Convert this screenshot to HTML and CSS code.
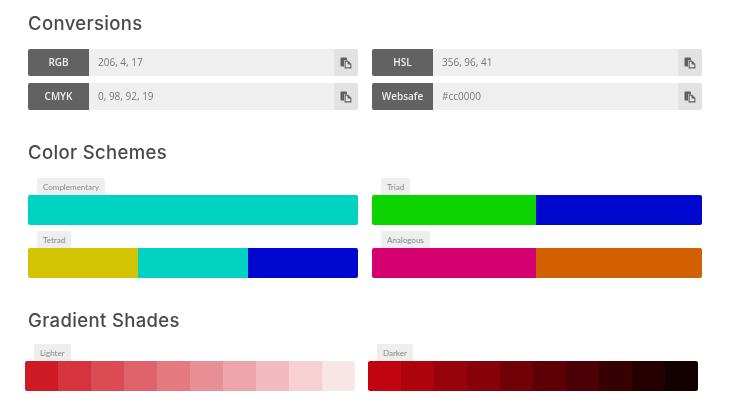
FILE: index.html
```html
<!DOCTYPE html>
<html lang="en">
<head>
<meta charset="utf-8">
<title>Color details</title>
<link rel="stylesheet" href="styles.css">
</head>
<body>
<svg class="defs" width="0" height="0" aria-hidden="true">
  <symbol id="copy" viewBox="0 0 12 12">
    <path d="M0.5 1.5 Q0.5 0.5 1.5 0.5 H6 Q7 0.5 7 1.5 V3 H5 Q4 3 4 4 V9.5 H1.5 Q0.5 9.5 0.5 8.5 Z" fill="#5f5f5f"/>
    <path d="M4.6 3.6 H8 L11.4 7 V11.4 H4.6 Z" fill="#5f5f5f"/>
    <path d="M5.7 4.7 H7.6 V7.4 H10.3 V10.3 H5.7 Z" fill="#e6e6e6"/>
  </symbol>
</svg>
<main class="page">
  <section class="conversions">
    <h2 class="title">Conversions</h2>
    <div class="grid field-grid">
      <div class="field"><span class="field-label">RGB</span><span class="field-value">206, 4, 17</span><span class="copy"><svg class="copy-icon"><use href="#copy"/></svg></span></div>
      <div class="field"><span class="field-label">HSL</span><span class="field-value">356, 96, 41</span><span class="copy"><svg class="copy-icon"><use href="#copy"/></svg></span></div>
      <div class="field"><span class="field-label">CMYK</span><span class="field-value">0, 98, 92, 19</span><span class="copy"><svg class="copy-icon"><use href="#copy"/></svg></span></div>
      <div class="field"><span class="field-label">Websafe</span><span class="field-value">#cc0000</span><span class="copy"><svg class="copy-icon"><use href="#copy"/></svg></span></div>
    </div>
  </section>

  <section class="schemes">
    <h2 class="title">Color Schemes</h2>
    <div class="grid scheme-grid">
      <div class="swatch-group"><span class="tag">Complementary</span>
        <div class="bar"><i class="c-teal"></i></div></div>
      <div class="swatch-group"><span class="tag">Triad</span>
        <div class="bar"><i class="c-green"></i><i class="c-blue"></i></div></div>
      <div class="swatch-group"><span class="tag">Tetrad</span>
        <div class="bar"><i class="c-yellow"></i><i class="c-teal"></i><i class="c-blue"></i></div></div>
      <div class="swatch-group"><span class="tag">Analogous</span>
        <div class="bar"><i class="c-pink"></i><i class="c-orange"></i></div></div>
    </div>
  </section>

  <section class="shades">
    <h2 class="title">Gradient Shades</h2>
    <div class="grid shade-grid">
      <div class="swatch-group"><span class="tag">Lighter</span>
        <div class="bar">
          <i class="l0"></i><i class="l1"></i><i class="l2"></i><i class="l3"></i><i class="l4"></i><i class="l5"></i><i class="l6"></i><i class="l7"></i><i class="l8"></i><i class="l9"></i>
        </div></div>
      <div class="swatch-group"><span class="tag">Darker</span>
        <div class="bar">
          <i class="d0"></i><i class="d1"></i><i class="d2"></i><i class="d3"></i><i class="d4"></i><i class="d5"></i><i class="d6"></i><i class="d7"></i><i class="d8"></i><i class="d9"></i>
        </div></div>
    </div>
  </section>
</main>
</body>
</html>
```
FILE: styles.css
```css
html, body { margin: 0; padding: 0; background: #fff; }
body { width: 730px; height: 415px; overflow: hidden; font-family: "Open Sans", "Liberation Sans", sans-serif; }
.defs { display: block; height: 0; }
.page { padding: 12px 28px 0; filter: blur(0.55px); }
.title {
  margin: 0;
  height: 22px;
  font-family: Inter, "Open Sans", sans-serif;
  font-size: 18.5px;
  line-height: 22px;
  font-weight: 500;
  letter-spacing: 0.35px;
  color: #4a4a4a;
}
.grid { display: grid; grid-template-columns: 330px 330px; column-gap: 14px; }

.field-grid { margin-top: 15px; row-gap: 7px; }
.field { display: flex; height: 27px; background: #efefef; border-radius: 2px; overflow: hidden; }
.field-label {
  width: 61px; flex: none; background: #626262; color: #eee;
  font-size: 10px; font-weight: 600; line-height: 27px; text-align: center;
}
.field-value { flex: 1; padding-left: 9px; font-size: 10px; line-height: 27px; color: #777; }
.copy { width: 24px; flex: none; background: #e2e2e2; display: flex; align-items: center; justify-content: center; }
.copy-icon { width: 12px; height: 12px; margin-top: 1px; }

.schemes { margin-top: 31px; }
.scheme-grid { margin-top: 15px; row-gap: 6px; }
.swatch-group { display: flex; flex-direction: column; align-items: flex-start; }
.tag {
  margin-left: 9px; height: 17px; padding: 0 6px; background: #eee; border-radius: 2px 2px 0 0;
  font-family: Lato, "Open Sans", sans-serif; font-size: 8px; line-height: 19px; color: #8a8a8a;
}
.bar { display: flex; align-self: stretch; height: 30px; border-radius: 2px; overflow: hidden; }
.bar i { display: block; flex: 1; }
.bar .c-green, .bar .c-pink { flex: 0 0 164px; }

.shades { margin-top: 31px; margin-left: -3px; }
.shades .title { margin-left: 3px; }
.shade-grid { margin-top: 13px; column-gap: 13px; }

.c-teal { background: #00d2c2; }
.c-green { background: #0cd400; }
.c-blue { background: #0008d0; }
.c-yellow { background: #d2c400; }
.c-pink { background: #d4006f; }
.c-orange { background: #d25f00; }

.l0 { background: #ce1a25; }
.l1 { background: #d5333d; }
.l2 { background: #da4b54; }
.l3 { background: #e0626b; }
.l4 { background: #e47a80; }
.l5 { background: #e88f96; }
.l6 { background: #eda6ab; }
.l7 { background: #f2babf; }
.l8 { background: #f6d0d3; }
.l9 { background: #fae5e6; }

.d0 { background: #c00410; }
.d1 { background: #ac030c; }
.d2 { background: #98020a; }
.d3 { background: #840208; }
.d4 { background: #720107; }
.d5 { background: #5e0106; }
.d6 { background: #4a0004; }
.d7 { background: #370003; }
.d8 { background: #250002; }
.d9 { background: #130001; }
```
